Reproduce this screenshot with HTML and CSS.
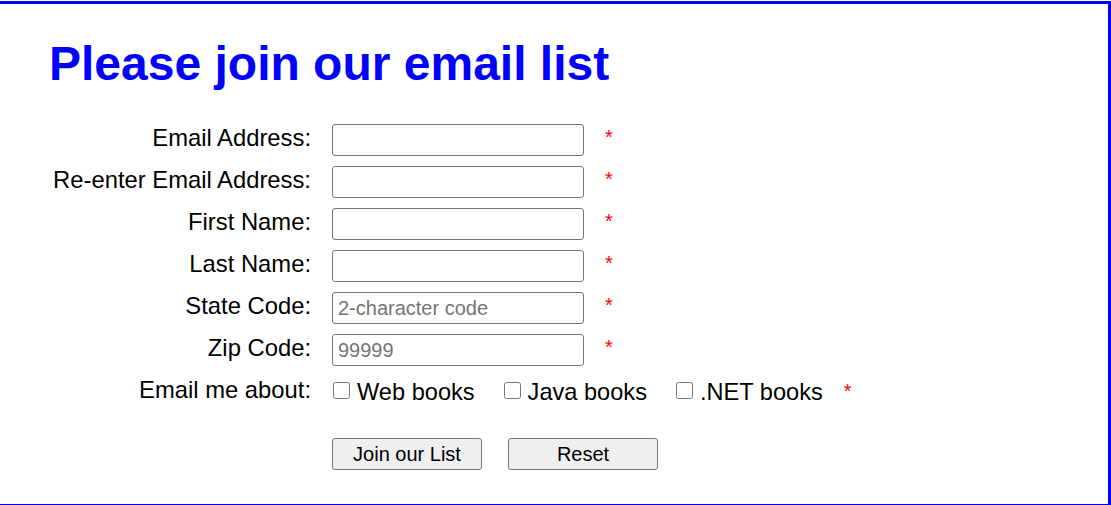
FILE: index.html
```html
<!DOCTYPE html>
<html lang="en">
<head>
  <meta charset="UTF-8">
  <title>Join Email List</title>
  <link rel="stylesheet" href="styles.css">
</head>
<body>
  <main class="page">
    <h1>Please join our email list</h1>

    <form class="signup" action="#" method="post">
      <label for="email">Email Address:</label>
      <input type="email" id="email" name="email">
      <span class="req">*</span>

      <label for="email2">Re-enter Email Address:</label>
      <input type="email" id="email2" name="email2">
      <span class="req">*</span>

      <label for="first">First Name:</label>
      <input type="text" id="first" name="first">
      <span class="req">*</span>

      <label for="last">Last Name:</label>
      <input type="text" id="last" name="last">
      <span class="req">*</span>

      <label for="state">State Code:</label>
      <input type="text" id="state" name="state" placeholder="2-character code">
      <span class="req">*</span>

      <label for="zip">Zip Code:</label>
      <input type="text" id="zip" name="zip" placeholder="99999">
      <span class="req">*</span>

      <label>Email me about:</label>
      <div class="checks">
        <label class="check"><input type="checkbox" name="web">Web books</label>
        <label class="check"><input type="checkbox" name="java">Java books</label>
        <label class="check"><input type="checkbox" name="net">.NET books</label>
        <span class="req">*</span>
      </div>

      <div class="buttons">
        <button type="submit">Join our List</button>
        <button type="reset">Reset</button>
      </div>
    </form>
  </main>
</body>
</html>
```

FILE: styles.css
```css
html, body {
  margin: 0;
  padding: 0;
  overflow: hidden;
  background: #fff;
}

body {
  font-family: "Liberation Sans", Arial, sans-serif;
  color: #000;
  padding-top: 1px;
}

.page {
  box-sizing: border-box;
  width: 1111px;
  height: 506px;
  border: 3px solid #0000ff;
  border-left: none;
  padding: 33px 0 0 49px;
}

h1 {
  margin: 0 0 33px;
  font-size: 48px;
  font-weight: bold;
  color: #0000ff;
  line-height: 54px;
}

.signup {
  display: grid;
  grid-template-columns: 262px 252px auto;
  column-gap: 21px;
  row-gap: 10px;
  align-items: center;
  justify-content: start;
}

.signup > label {
  text-align: right;
  font-size: 23.8px;
  line-height: 28px;
  padding-bottom: 4px;
}

.signup input[type="text"],
.signup input[type="email"] {
  box-sizing: border-box;
  width: 252px;
  height: 32px;
  margin: 0;
  padding: 1px 5px;
  border: 1px solid #767676;
  border-radius: 3px;
  font-family: "Liberation Sans", Arial, sans-serif;
  font-size: 20px;
}

.signup input::placeholder {
  color: #757575;
}

.req {
  color: #ff0000;
  font-size: 20px;
  padding-bottom: 6px;
}

.checks {
  grid-column: 2 / 4;
  display: flex;
  align-items: center;
  height: 32px;
}

.check {
  display: flex;
  align-items: center;
  font-size: 23.6px;
  margin-right: 28px;
}

.check input {
  width: 17px;
  height: 17px;
  margin: 0 7px 3px 1px;
}

.checks .req {
  margin-left: -7px;
  padding-bottom: 2px;
}

.buttons {
  grid-column: 2 / 4;
  display: flex;
  gap: 26px;
  margin-top: 20px;
}

button {
  box-sizing: border-box;
  width: 150px;
  height: 32px;
  padding: 0;
  background: #efefef;
  border: 1px solid #767676;
  border-radius: 3px;
  font-family: "Liberation Sans", Arial, sans-serif;
  font-size: 20px;
  color: #000;
}
```
